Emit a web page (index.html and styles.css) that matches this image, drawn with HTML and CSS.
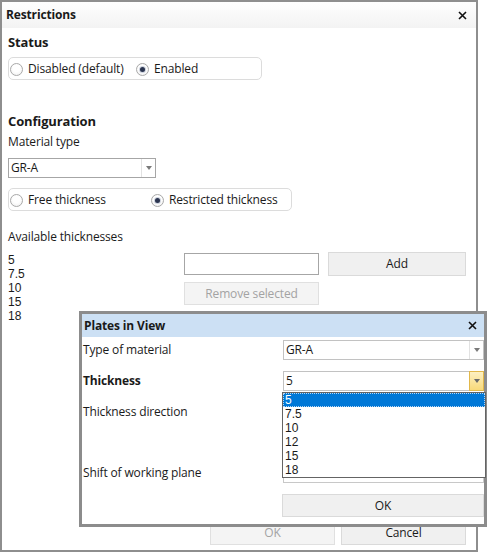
FILE: index.html
```html
<!DOCTYPE html>
<html>
<head>
<meta charset="utf-8">
<link rel="stylesheet" href="styles.css">
</head>
<body>
<div class="win">
  <div class="win-title">
    <span>Restrictions</span>
    <svg class="xicon" width="9" height="9" viewBox="0 0 9 9"><path d="M1 1L8 8M8 1L1 8" stroke="#111" stroke-width="1.6"/></svg>
  </div>
  <div class="win-body">
    <div class="h h-status">Status</div>
    <div class="radiogroup rg1">
      <label class="radio"><span class="rb"></span>Disabled (default)</label>
      <label class="radio"><span class="rb on"></span>Enabled</label>
    </div>
    <div class="h h-conf">Configuration</div>
    <div class="lbl lbl-mat">Material type</div>
    <div class="select sel-main"><span class="val">GR-A</span><span class="arrow"><i></i></span></div>
    <div class="radiogroup rg2">
      <label class="radio"><span class="rb"></span>Free thickness</label>
      <label class="radio"><span class="rb on"></span>Restricted thickness</label>
    </div>
    <div class="lbl lbl-avail">Available thicknesses</div>
    <div class="thick-row">
      <ul class="tlist">
        <li>5</li><li>7.5</li><li>10</li><li>15</li><li>18</li>
      </ul>
      <div class="controls">
        <div class="input"></div>
        <div class="btn btn-add">Add</div>
        <div class="btn btn-rem disabled">Remove selected</div>
      </div>
    </div>
    <div class="footer">
      <div class="btn fbtn disabled">OK</div>
      <div class="btn fbtn">Cancel</div>
    </div>
  </div>
</div>

<div class="dlg">
  <div class="dlg-title">
    <span>Plates in View</span>
    <svg class="xicon" width="9" height="9" viewBox="0 0 9 9"><path d="M1 1L8 8M8 1L1 8" stroke="#111" stroke-width="1.6"/></svg>
  </div>
  <div class="dlg-body">
    <div class="drow r1">
      <div class="dl">Type of material</div>
      <div class="select field"><span class="val">GR-A</span><span class="arrow"><i></i></span></div>
    </div>
    <div class="drow r2">
      <div class="dl bold">Thickness</div>
      <div class="select field"><span class="val">5</span><span class="arrow hot"><i></i></span></div>
    </div>
    <div class="drow r3">
      <div class="dl">Thickness direction</div>
    </div>
    <div class="drow r4">
      <div class="dl">Shift of working plane</div>
      <div class="input field"></div>
    </div>
    <div class="drow r5">
      <div class="btn okbtn">OK</div>
    </div>
  </div>
  <ul class="dropdown">
    <li class="sel">5</li><li>7.5</li><li>10</li><li>12</li><li>15</li><li>18</li>
  </ul>
</div>
</body>
</html>
```

FILE: styles.css
```css
* { box-sizing: border-box; margin: 0; padding: 0; }
body {
  margin: 0;
  background: #fff;
  font-family: "Open Sans", "Noto Sans", sans-serif;
  font-size: 12px;
  line-height: 16px;
  letter-spacing: -0.15px;
  color: #1a1a1a;
  position: relative;
  width: 489px;
  height: 554px;
  overflow: hidden;
}
.win {
  width: 478px;
  height: 552px;
  border: 2px solid #8e8e8e;
  display: flex;
  flex-direction: column;
  background: #fff;
}
.win-title {
  height: 26px;
  flex: none;
  display: flex;
  align-items: center;
  justify-content: space-between;
  padding: 0 9px 0 4px;
  font-weight: bold;
  background: linear-gradient(#fefefe, #f3f3f3);
}
.xicon { display: block; }
.win-body {
  flex: 1;
  display: flex;
  flex-direction: column;
  padding: 0 10px 5px 6px;
}
.h { font-weight: bold; font-size: 13px; line-height: 16px; }
.h-status { margin-top: 6px; }
.h-conf { margin-top: 33px; }
.lbl-mat { margin-top: 5px; }
.radiogroup {
  height: 23px;
  border: 1px solid #dcdcdc;
  border-radius: 5px;
  display: flex;
  align-items: center;
  padding-left: 1px;
}
.rg1 { margin-top: 7px; width: 254px; }
.rg2 { margin-top: 10px; width: 284px; }
.rg1 .radio:first-child { width: 126px; }
.rg2 .radio:first-child { width: 141px; }
.radio { display: flex; align-items: center; gap: 5px; }
.rb {
  width: 13px;
  height: 13px;
  border-radius: 50%;
  border: 1px solid #a9a9a9;
  background: radial-gradient(circle at 50% 40%, #fff 40%, #ececec 100%);
  display: flex;
  align-items: center;
  justify-content: center;
  margin-top: 1px;
}
.rb.on::after {
  content: "";
  width: 5px;
  height: 5px;
  border-radius: 50%;
  background: #2b3550;
  box-shadow: 0 0 0 1px #cfd4df;
}
.select {
  height: 20px;
  border: 1px solid #a6a6a6;
  display: flex;
  align-items: center;
  background: #fff;
}
.sel-main { margin-top: 8px; width: 148px; }
.select .val { flex: 1; padding-left: 2px; }
.select .arrow {
  width: 14px;
  height: 100%;
  border-left: 1px solid #e2e2e2;
  display: flex;
  align-items: center;
  justify-content: center;
}
.select .arrow i {
  display: block;
  width: 0;
  height: 0;
  border-left: 3px solid transparent;
  border-right: 3px solid transparent;
  border-top: 4px solid #7a7a7a;
}
.select .arrow.hot {
  background: linear-gradient(#fdf0c2, #f8d97a);
  border: 1px solid #e2b84a;
  margin-right: -1px;
  height: 20px;
  width: 15px;
}
.select .arrow.hot i { border-top-color: #6a6a6a; }
.lbl-avail { margin-top: 18px; }
.thick-row { display: flex; align-items: flex-start; margin-top: 7px; }
.tlist, .dropdown {
  list-style: none;
  font-family: "Liberation Sans", Arial, sans-serif;
  font-size: 12px;
  letter-spacing: 0;
}
.tlist { width: 176px; padding-top: 1px; }
.tlist li { line-height: 14px; height: 14px; }
.controls {
  display: grid;
  grid-template-columns: 135px 138px;
  grid-template-rows: 24px 23px;
  column-gap: 9px;
  row-gap: 6px;
  align-items: start;
  align-content: start;
}
.input { height: 22px; border: 1px solid #a6a6a6; background: #fff; }
.controls .input { margin-top: 1px; }
.btn {
  height: 24px;
  border: 1px solid #dadada;
  background: #f0f0f0;
  display: flex;
  align-items: center;
  justify-content: center;
  color: #1a1a1a;
}
.btn.disabled { color: #a3a3a3; background: #f4f4f4; border-color: #e0e0e0; }
.btn-rem { height: 23px; }
.footer {
  margin-top: auto;
  display: flex;
  justify-content: flex-end;
  gap: 6px;
}
.fbtn { width: 125px; }

.dlg {
  position: absolute;
  left: 79px;
  top: 311px;
  width: 408px;
  height: 216px;
  border: 3px solid #8c8c8c;
  background: #fff;
  display: flex;
  flex-direction: column;
}
.dlg-title {
  height: 23px;
  flex: none;
  background: #cce0f4;
  display: flex;
  align-items: center;
  justify-content: space-between;
  padding: 0 7px 0 2px;
  font-weight: bold;
}
.dlg-body { display: flex; flex-direction: column; padding-left: 1px; }
.drow { display: flex; align-items: center; }
.dl { width: 200px; flex: none; }
.bold { font-weight: bold; }
.field { width: 201px; }
.dlg .select { border-color: #c2c2c2; }
.r1 { margin-top: 3px; }
.r2 { margin-top: 11px; }
.r3 { margin-top: 13px; }
.r4 { margin-top: 43px; }
.r4 .input { height: 20px; border-color: #c8c8c8; }
.r5 { margin-top: 11px; }
.okbtn { margin-left: 199px; width: 203px; height: 23px; }
.dropdown {
  position: absolute;
  left: 200px;
  top: 78px;
  width: 204px;
  height: 86px;
  border: 1px solid #646464;
  background: #fff;
}
.dropdown li { height: 14px; line-height: 14px; padding-left: 2px; }
.dropdown li.sel {
  background: #0078d7;
  color: #fff;
  outline: 1px dotted #b8d6f2;
  outline-offset: -1px;
}
```
